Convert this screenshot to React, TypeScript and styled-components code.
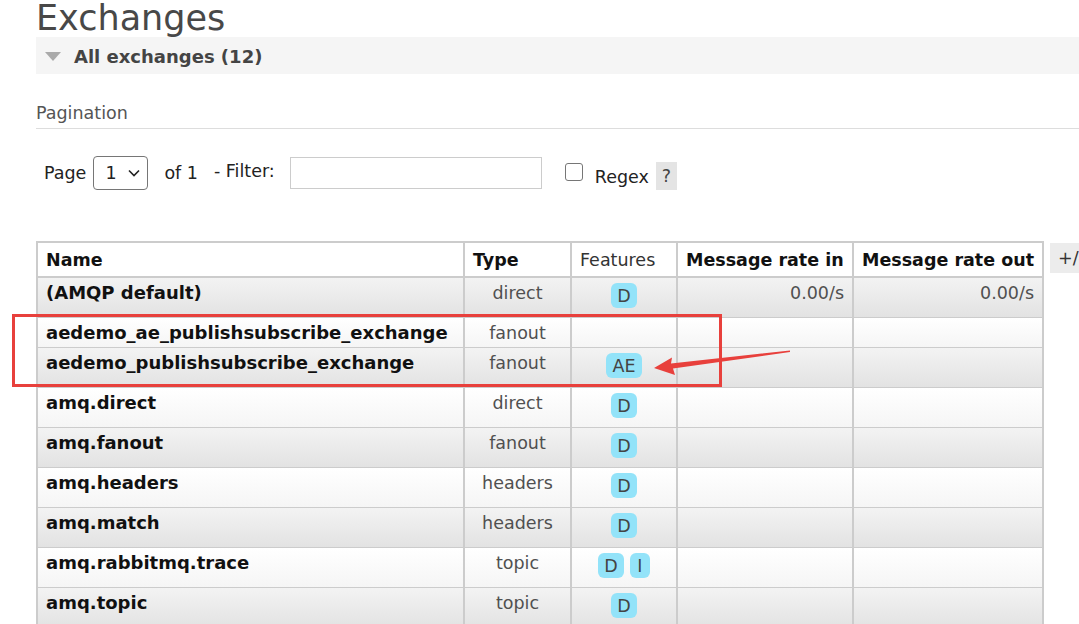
import React from "react";
import styled, { createGlobalStyle } from "styled-components";

const GlobalStyle = createGlobalStyle`
  html, body {
    margin: 0;
    padding: 0;
    overflow: hidden;
    background: #ffffff;
  }
  body {
    font-family: "DejaVu Sans", Verdana, sans-serif;
    color: #222;
  }
`;

const Page = styled.div`
  position: relative;
  width: 1079px;
  height: 624px;
  padding-left: 36px;
  box-sizing: border-box;
  overflow: hidden;
`;

const Title = styled.h1`
  margin: 0;
  font-size: 35px;
  line-height: 36px;
  font-weight: normal;
  color: #484848;
  white-space: nowrap;
`;

const SectionBar = styled.div`
  margin-top: 1px;
  height: 37px;
  background: #f5f5f5;
  display: flex;
  align-items: center;
  padding: 2px 0 0 9px;
  box-sizing: border-box;
`;

const Triangle = styled.span`
  width: 0;
  height: 0;
  border-left: 8px solid transparent;
  border-right: 8px solid transparent;
  border-top: 9px solid #aaaaaa;
  margin-right: 13px;
`;

const SectionTitle = styled.h2`
  margin: 0;
  font-size: 18px;
  line-height: 22px;
  font-weight: bold;
  color: #444;
`;

const PaginationLabel = styled.h3`
  margin: 29px 0 0;
  font-size: 17.5px;
  line-height: 20px;
  font-weight: normal;
  color: #555;
  padding-bottom: 5px;
  border-bottom: 1px solid #dddddd;
`;

const PagerRow = styled.div`
  margin-top: 27px;
  padding-left: 8px;
  height: 34px;
  display: flex;
  align-items: center;
  font-size: 17.5px;
  color: #222;
`;

const Label = styled.span<{ $ml?: number; $dy?: number }>`
  margin-left: ${(p) => p.$ml ?? 0}px;
  position: relative;
  top: ${(p) => p.$dy ?? 0}px;
  white-space: nowrap;
`;

const SelectWrap = styled.div`
  position: relative;
  margin-left: 7px;
  width: 55px;
  height: 34px;
`;

const Select = styled.select`
  appearance: none;
  width: 100%;
  height: 100%;
  border: 1px solid #767676;
  border-radius: 4px;
  background: #fff;
  font-family: inherit;
  font-size: 17.5px;
  color: #222;
  padding: 0 0 0 11px;
  margin: 0;
  box-sizing: border-box;
`;

const Chevron = styled.svg`
  position: absolute;
  right: 8px;
  top: 13px;
  pointer-events: none;
`;

const FilterInput = styled.input`
  margin-left: 15px;
  width: 252px;
  height: 32px;
  border: 1px solid #cccccc;
  box-sizing: border-box;
  font-family: inherit;
  font-size: 15px;
  padding: 0 6px;
`;

const Checkbox = styled.input`
  appearance: none;
  margin: 0 0 0 23px;
  width: 18px;
  height: 18px;
  border: 1px solid #767676;
  border-radius: 3px;
  background: #fff;
  position: relative;
  top: -1px;
`;

const HelpButton = styled.span`
  margin-left: 7px;
  width: 21px;
  height: 28px;
  background: #e4e4e4;
  color: #444;
  display: flex;
  align-items: center;
  justify-content: center;
  position: relative;
  top: 3px;
`;

const TableArea = styled.div`
  margin-top: 51px;
  display: flex;
  align-items: flex-start;
`;

const Table = styled.table`
  width: 1006px;
  flex: none;
  border-collapse: collapse;
  table-layout: fixed;
  border: 2px solid #cccccc;
  font-size: 17.5px;
`;

const Th = styled.th<{ $bold?: boolean }>`
  text-align: left;
  font-weight: ${(p) => (p.$bold ? "bold" : "normal")};
  color: ${(p) => (p.$bold ? "#111" : "#333")};
  background: #ffffff;
  padding: 7px 8px 6px;
  line-height: 20px;
  border-left: 2px solid #cccccc;
  border-right: 2px solid #cccccc;
  border-bottom: 2px solid #cccccc;
  white-space: nowrap;
  overflow: hidden;
`;

const Tr = styled.tr<{ $alt: boolean }>`
  background: ${(p) =>
    p.$alt
      ? "linear-gradient(#f3f3f3, #e2e2e2)"
      : "linear-gradient(#ffffff, #f5f5f5)"};
`;

const Td = styled.td<{ $align?: "left" | "center" | "right"; $bold?: boolean }>`
  text-align: ${(p) => p.$align ?? "left"};
  font-weight: ${(p) => (p.$bold ? "bold" : "normal")};
  font-size: ${(p) => (p.$bold ? "18px" : "17.5px")};
  color: ${(p) => (p.$bold ? "#111" : "#505050")};
  vertical-align: top;
  padding: 5px 8px 4px;
  line-height: 20px;
  border-left: 2px solid #cccccc;
  border-right: 2px solid #cccccc;
  border-bottom: 1px solid #cccccc;
  white-space: nowrap;
  overflow: hidden;
`;

const FeatureCell = styled(Td)`
  padding-top: 4px;
  padding-bottom: 4px;
`;

const Badge = styled.abbr`
  display: inline-block;
  vertical-align: top;
  min-width: 20px;
  height: 25px;
  line-height: 26px;
  padding: 0 6px;
  margin: 1px 3px 5px;
  box-sizing: border-box;
  border-radius: 6px;
  background: #93e3f9;
  color: #444;
  text-decoration: none;
  text-align: center;
`;

const ToggleButton = styled.span`
  margin: 2px 0 0 6px;
  flex: none;
  height: 30px;
  padding: 0 8px;
  background: #ececec;
  color: #333;
  font-size: 17.5px;
  line-height: 30px;
  white-space: nowrap;
`;

const Annotation = styled.svg`
  position: absolute;
  left: 0;
  top: 0;
  pointer-events: none;
`;

type Row = {
  name: string;
  type: string;
  features: string[];
  rateIn?: string;
  rateOut?: string;
};

const rows: Row[] = [
  { name: "(AMQP default)", type: "direct", features: ["D"], rateIn: "0.00/s", rateOut: "0.00/s" },
  { name: "aedemo_ae_publishsubscribe_exchange", type: "fanout", features: [] },
  { name: "aedemo_publishsubscribe_exchange", type: "fanout", features: ["AE"] },
  { name: "amq.direct", type: "direct", features: ["D"] },
  { name: "amq.fanout", type: "fanout", features: ["D"] },
  { name: "amq.headers", type: "headers", features: ["D"] },
  { name: "amq.match", type: "headers", features: ["D"] },
  { name: "amq.rabbitmq.trace", type: "topic", features: ["D", "I"] },
  { name: "amq.topic", type: "topic", features: ["D"] },
];

export default function App() {
  return (
    <>
      <GlobalStyle />
      <Page>
        <Title>Exchanges</Title>
        <SectionBar>
          <Triangle />
          <SectionTitle>All exchanges (12)</SectionTitle>
        </SectionBar>
        <PaginationLabel>Pagination</PaginationLabel>
        <PagerRow>
          <Label>Page</Label>
          <SelectWrap>
            <Select defaultValue="1">
              <option value="1">1</option>
            </Select>
            <Chevron width="12" height="8" viewBox="0 0 12 8">
              <path d="M1 1.5 L6 6.5 L11 1.5" fill="none" stroke="#222" strokeWidth="1.6" />
            </Chevron>
          </SelectWrap>
          <Label $ml={16}>of 1</Label>
          <Label $ml={16} $dy={-2}>- Filter:</Label>
          <FilterInput type="text" />
          <Checkbox type="checkbox" />
          <Label $ml={12} $dy={4}>Regex</Label>
          <HelpButton>?</HelpButton>
        </PagerRow>
        <TableArea>
          <Table>
            <colgroup>
              <col style={{ width: 427 }} />
              <col style={{ width: 107 }} />
              <col style={{ width: 106 }} />
              <col style={{ width: 176 }} />
              <col style={{ width: 190 }} />
            </colgroup>
            <thead>
              <tr>
                <Th $bold>Name</Th>
                <Th $bold>Type</Th>
                <Th>Features</Th>
                <Th $bold>Message rate in</Th>
                <Th $bold>Message rate out</Th>
              </tr>
            </thead>
            <tbody>
              {rows.map((r, i) => (
                <Tr key={r.name} $alt={i % 2 === 0}>
                  <Td $bold>{r.name}</Td>
                  <Td $align="center">{r.type}</Td>
                  <FeatureCell $align="center">
                    {r.features.map((f) => (
                      <Badge key={f}>{f}</Badge>
                    ))}
                  </FeatureCell>
                  <Td $align="right">{r.rateIn ?? ""}</Td>
                  <Td $align="right">{r.rateOut ?? ""}</Td>
                </Tr>
              ))}
            </tbody>
          </Table>
          <ToggleButton>+/-</ToggleButton>
        </TableArea>
        <Annotation width="1079" height="624" viewBox="0 0 1079 624">
          <rect x="13.5" y="315.5" width="707" height="70" fill="none" stroke="#e8403c" strokeWidth="3" />
          <polygon
            points="654,368 672,357.5 671,363.5 790,350.5 790,352 673,368.5 675,375"
            fill="#e8403c"
          />
        </Annotation>
      </Page>
    </>
  );
}
